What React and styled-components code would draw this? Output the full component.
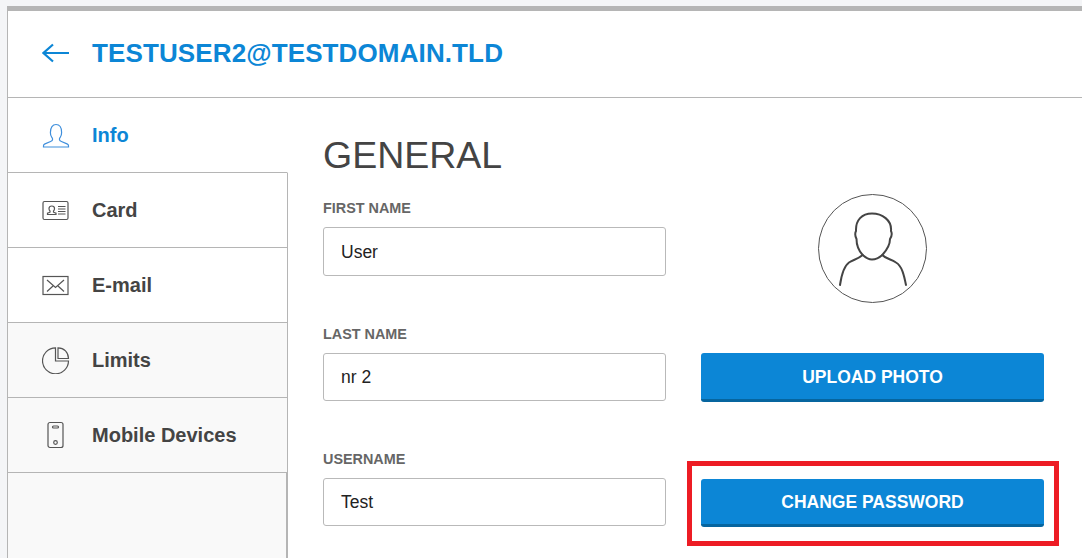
import React from 'react';
import styled, { createGlobalStyle } from 'styled-components';

const GlobalStyle = createGlobalStyle`
  html, body {
    margin: 0;
    height: 100%;
    overflow: hidden;
    background-color: #f4f5f7;
    font-family: "Liberation Sans", Arial, sans-serif;
  }
`;

const Panel = styled.div`
  box-sizing: border-box;
  width: 1090px;
  height: 560px;
  margin: 6px 0 0 7px;
  background-color: white;
  border-top: 5px solid #b5b5b5;
  border-left: 1px solid #b5b5b5;
  display: flex;
  flex-direction: column;
`;

const Header = styled.div`
  box-sizing: border-box;
  height: 87px;
  flex: none;
  display: flex;
  align-items: center;
  padding: 0 0 3px 34px;
  gap: 22px;
  border-bottom: 1px solid #b5b5b5;
`;

const Title = styled.h1`
  margin: 0;
  font-size: 26px;
  line-height: 30px;
  font-weight: 700;
  letter-spacing: 0.12px;
  color: #0c86d6;
`;

const Body = styled.div`
  flex: 1;
  display: flex;
  min-height: 0;
`;

const Sidebar = styled.div`
  width: 280px;
  flex: none;
  display: flex;
  flex-direction: column;
  background-color: #f9f9f9;
`;

const NavItem = styled.div`
  box-sizing: border-box;
  height: 75px;
  flex: none;
  display: flex;
  align-items: center;
  padding: 0 0 0 34px;
  gap: 22px;
  font-size: 20px;
  font-weight: 700;
  color: ${(p) => (p.$active ? '#0c86d6' : '#444444')};
  background-color: ${(p) => (p.$muted ? '#f9f9f9' : 'white')};
  border-right: ${(p) => (p.$active ? '1px solid white' : '1px solid #b5b5b5')};
  border-bottom: 1px solid #b5b5b5;
`;

const NavIcon = styled.svg`
  width: 28px;
  height: 28px;
  flex: none;
  fill: none;
  stroke: currentColor;
  stroke-width: 1.2;
  color: ${(p) => (p.$active ? '#3f8fdc' : '#555555')};
`;

const SidebarRest = styled.div`
  flex: 1;
  border-right: 2px solid #b5b5b5;
`;

const Content = styled.div`
  flex: 1;
  padding: 34px 0 0 35px;
`;

const SectionTitle = styled.h2`
  margin: 0;
  font-size: 37.5px;
  line-height: 46px;
  font-weight: 400;
  color: #444444;
`;

const Columns = styled.div`
  display: flex;
  gap: 35px;
  align-items: flex-start;
`;

const FormColumn = styled.div`
  width: 343px;
  padding-top: 22px;
  display: flex;
  flex-direction: column;
  gap: 50px;
`;

const Field = styled.div`
  display: flex;
  flex-direction: column;
  gap: 11px;
`;

const FieldLabel = styled.label`
  font-size: 14.4px;
  line-height: 16px;
  font-weight: 700;
  color: #666666;
`;

const TextValue = styled.div`
  box-sizing: border-box;
  height: ${(p) => p.$height}px;
  display: flex;
  align-items: center;
  padding: 1px 17px 0;
  border: 1px solid #b9b9b9;
  border-radius: 3px;
  font-size: 17.5px;
  color: #222222;
`;

const SideColumn = styled.div`
  width: 343px;
  display: flex;
  flex-direction: column;
  align-items: stretch;
  padding-top: 16px;
`;

const Avatar = styled.div`
  box-sizing: border-box;
  width: 109px;
  height: 109px;
  align-self: center;
  border: 1px solid #555555;
  border-radius: 50%;
  display: flex;
  align-items: center;
  justify-content: center;
`;

const ButtonSlot = styled.div`
  position: relative;
  margin-top: ${(p) => p.$top}px;
`;

const ActionButton = styled.button`
  box-sizing: border-box;
  display: block;
  width: 100%;
  height: ${(p) => p.$height}px;
  padding: 2px 0 0;
  background-color: #0c86d6;
  border: none;
  border-bottom: 3px solid #06659f;
  border-radius: 3px;
  color: white;
  font-family: inherit;
  font-size: 17.5px;
  font-weight: 700;
`;

const Highlight = styled.div`
  position: absolute;
  top: -18px;
  left: -14px;
  right: -15px;
  bottom: -19px;
  border: 5px solid #ed1c24;
  pointer-events: none;
`;

const navItems = [
  {
    label: 'Info',
    active: true,
    icon: (
      <path d="M1.5 26v-1.2c0-.9.6-1.5 1.5-1.9l5.6-2.4c1.4-.6 2-1.4 2-2.3 0-.8-.5-1.4-1-2.2-.8-1.2-1.2-2.7-1.2-4.6C8.4 6.6 10.6 3.5 14 3.5s5.600 3.100 5.600 7.900c0 1.900-.4 3.400-1.200 4.600-.5.8-1 1.400-1 2.200 0 .9.600 1.700 2 2.300l5.600 2.400c.9.400 1.500 1 1.500 1.900V26z" />
    ),
  },
  {
    label: 'Card',
    icon: (
      <>
        <rect x="1" y="5.500" width="25" height="18" rx="1.500" />
        <path d="M5.500 18.500h8.500v-1.300l-2.500-1v-1.200c.7-.6 1-1.400 1-2.500 0-1.500-.9-2.500-2.700-2.500S7 11 7 12.500c0 1.100.3 1.900 1 2.500v1.200l-2.500 1zM16 10.500h7.500M16 13h7.500M16 15.500h7.500M16 18h7.500" />
      </>
    ),
  },
  {
    label: 'E-mail',
    icon: (
      <>
        <rect x="1" y="5.500" width="25" height="18" />
        <path d="M5 9l8.500 7.500L22 9M5 20.500l6-5.500M22 20.500l-6-5.500" />
      </>
    ),
  },
  {
    label: 'Limits',
    muted: true,
    icon: (
      <>
        <path d="M13.500 1.800A13 13 0 1 0 26.500 15H13.500z" />
        <path d="M16 1.800V12.500H26.500C26.500 6.500 22 1.800 16 1.800z" />
      </>
    ),
  },
  {
    label: 'Mobile Devices',
    muted: true,
    icon: (
      <>
        <rect x="6" y="1.500" width="15" height="25" rx="2" />
        <rect x="10.500" y="5" width="6" height="2" rx="1" />
        <circle cx="13.500" cy="21.500" r="1.800" />
      </>
    ),
  },
];

const fields = [
  { label: 'FIRST NAME', value: 'User', height: 49 },
  { label: 'LAST NAME', value: 'nr 2', height: 48 },
  { label: 'USERNAME', value: 'Test', height: 48 },
];

const App = () => {
  return (
    <>
      <GlobalStyle />
      <Panel>
        <Header>
          <svg width="28" height="22" viewBox="0 0 28 22" fill="none" stroke="#0c86d6" strokeWidth="2.200">
            <path d="M1.500 11H27M11 2.500l-9.500 8.500 9.500 8.500" />
          </svg>
          <Title>TESTUSER2@TESTDOMAIN.TLD</Title>
        </Header>
        <Body>
          <Sidebar>
            {navItems.map((item) => (
              <NavItem key={item.label} $active={item.active} $muted={item.muted}>
                <NavIcon viewBox="0 0 28 28" $active={item.active}>
                  {item.icon}
                </NavIcon>
                {item.label}
              </NavItem>
            ))}
            <SidebarRest />
          </Sidebar>
          <Content>
            <SectionTitle>GENERAL</SectionTitle>
            <Columns>
              <FormColumn>
                {fields.map((field) => (
                  <Field key={field.label}>
                    <FieldLabel>{field.label}</FieldLabel>
                    <TextValue $height={field.height}>{field.value}</TextValue>
                  </Field>
                ))}
              </FormColumn>
              <SideColumn>
                <Avatar>
                  <svg width="107" height="107" viewBox="0 0 107 107" fill="none" stroke="#444444" strokeWidth="2" strokeLinecap="round" strokeLinejoin="round">
                    <path d="M21 90C22.500 80 25 71 30 67.500 34 65 39 64 43.700 60 47 63 49 64.500 53 64.500 57 64.500 60 63 63.300 60 67 64 72 64 77 67.500 83 71 85 80 87 90" />
                    <path d="M43.700 60C40 56 37.500 50 37.500 44 36 41 36 38 37 36 36.500 25 43 18.500 53 18.500 63 18.500 73 25 72 36 73 38 73 41 71 44 71 50 67 56 63.300 60" />
                  </svg>
                </Avatar>
                <ButtonSlot $top={50}>
                  <ActionButton $height={49}>UPLOAD PHOTO</ActionButton>
                </ButtonSlot>
                <ButtonSlot $top={77}>
                  <ActionButton $height={48}>CHANGE PASSWORD</ActionButton>
                  <Highlight />
                </ButtonSlot>
              </SideColumn>
            </Columns>
          </Content>
        </Body>
      </Panel>
    </>
  );
};

export default App;
